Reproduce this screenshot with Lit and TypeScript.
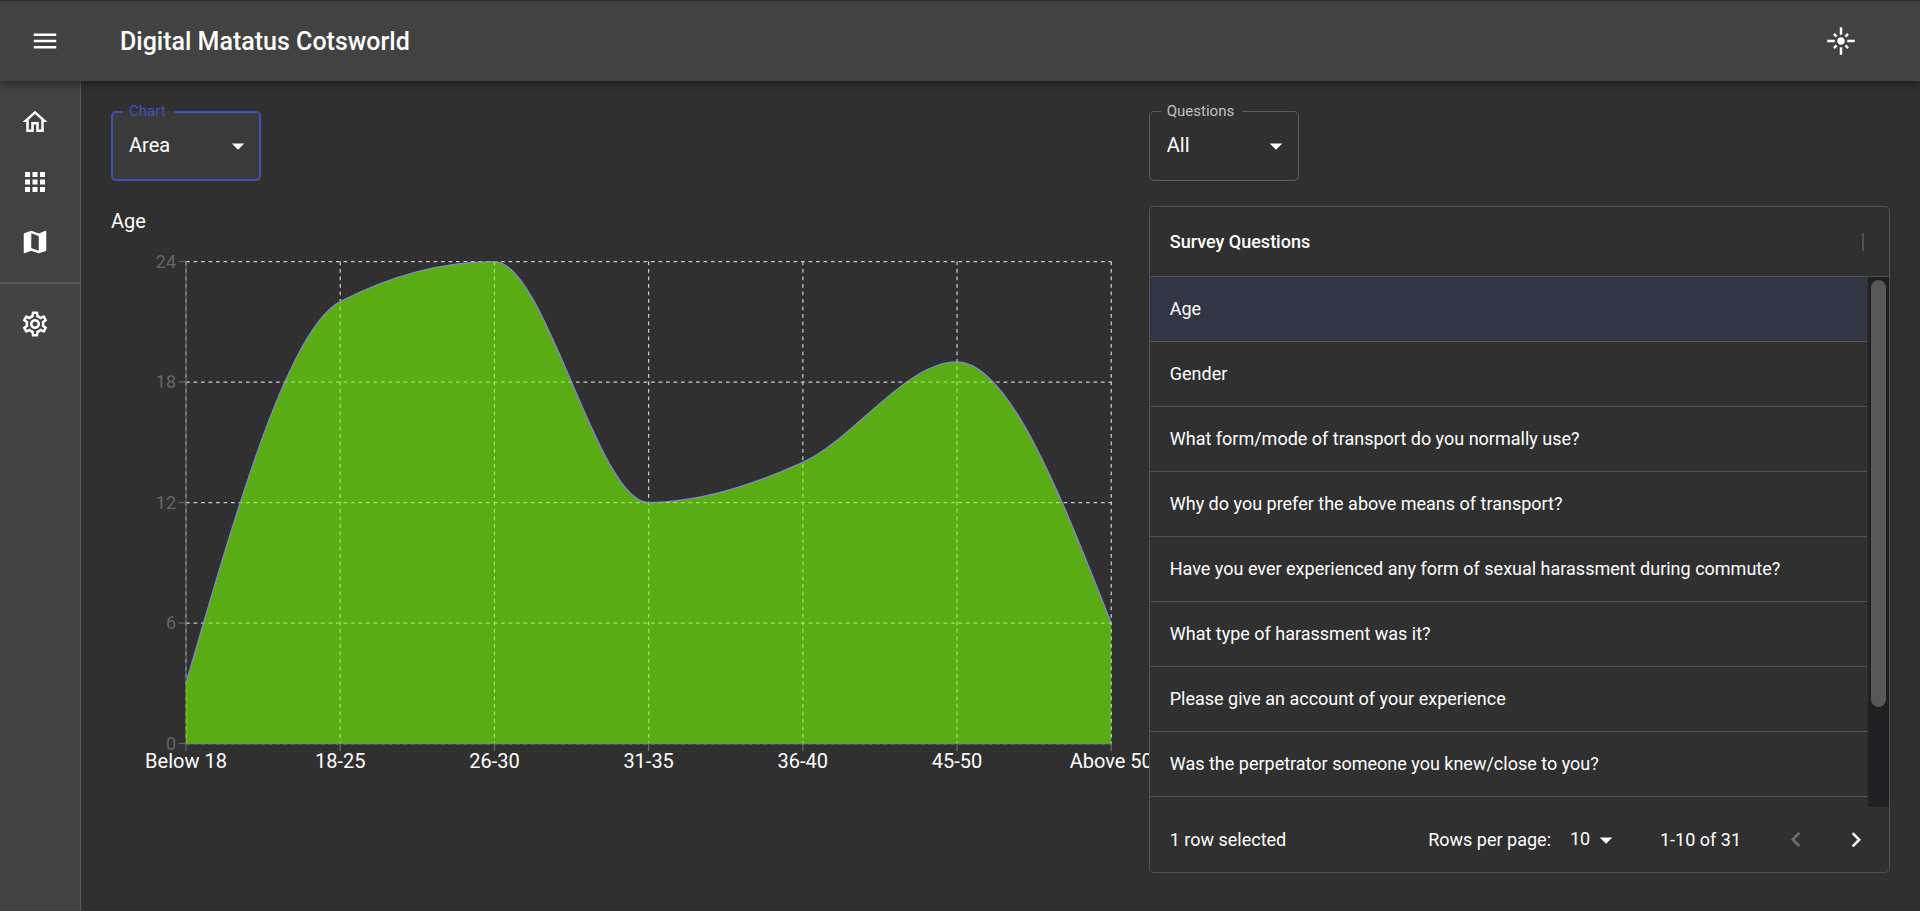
import { LitElement, html, svg, css } from "lit";
import { customElement, property, state } from "lit/decorators.js";
import { classMap } from "lit/directives/class-map.js";

const ICONS = {
  menu: "M3 18h18v-2H3v2zm0-5h18v-2H3v2zm0-7v2h18V6H3z",
  flare:
    "M7 11H1v2h6v-2zm2.17-3.24L7.05 5.64 5.64 7.05l2.12 2.12 1.41-1.41zM13 1h-2v6h2V1zm5.36 6.05l-1.41-1.41-2.12 2.12 1.41 1.41 2.12-2.12zM17 11v2h6v-2h-6zm-5-2c-1.66 0-3 1.34-3 3s1.34 3 3 3 3-1.34 3-3-1.34-3-3-3zm2.83 7.24l2.12 2.12 1.41-1.41-2.12-2.12-1.41 1.41zm-9.19.71l1.41 1.41 2.12-2.12-1.41-1.41-2.12 2.12zM11 23h2v-6h-2v6z",
  home: "M12 5.69l5 4.5V18h-2v-6H9v6H7v-7.81l5-4.5M12 3L2 12h3v8h6v-6h2v6h6v-8h3L12 3z",
  apps: "M4 8h4V4H4v4zm6 12h4v-4h-4v4zm-6 0h4v-4H4v4zm0-6h4v-4H4v4zm6 0h4v-4h-4v4zm6-10v4h4V4h-4zm-6 4h4V4h-4v4zm6 6h4v-4h-4v4zm0 6h4v-4h-4v4z",
  map: "M20.5 3l-.16.03L15 5.1 9 3 3.36 4.9c-.21.07-.36.25-.36.48V20.5c0 .28.22.5.5.5l.16-.03L9 18.9l6 2.1 5.64-1.9c.21-.07.36-.25.36-.48V3.5c0-.28-.22-.5-.5-.5zM15 19l-6-2.11V5l6 2.11V19z",
  settings:
    "M19.43 12.98c.04-.32.07-.64.07-.98 0-.34-.03-.66-.07-.98l2.11-1.65c.19-.15.24-.42.12-.64l-2-3.46c-.09-.16-.26-.25-.44-.25-.06 0-.12.01-.17.03l-2.49 1c-.52-.4-1.08-.73-1.69-.98l-.38-2.65C14.46 2.18 14.25 2 14 2h-4c-.25 0-.46.18-.49.42l-.38 2.65c-.61.25-1.17.59-1.69.98l-2.49-1c-.06-.02-.12-.03-.18-.03-.17 0-.34.09-.43.25l-2 3.46c-.13.22-.07.49.12.64l2.11 1.65c-.04.32-.07.65-.07.98 0 .33.03.66.07.98l-2.11 1.65c-.19.15-.24.42-.12.64l2 3.46c.09.16.26.25.44.25.06 0 .12-.01.17-.03l2.49-1c.52.4 1.08.73 1.69.98l.38 2.65c.03.24.24.42.49.42h4c.25 0 .46-.18.49-.42l.38-2.65c.61-.25 1.17-.59 1.69-.98l2.49 1c.06.02.12.03.18.03.17 0 .34-.09.43-.25l2-3.46c.12-.22.07-.49-.12-.64l-2.11-1.65zm-1.98-1.71c.04.31.05.52.05.73 0 .21-.02.43-.05.73l-.14 1.13.89.7 1.08.84-.7 1.21-1.27-.51-1.04-.42-.9.68c-.43.32-.84.56-1.25.73l-1.06.43-.16 1.13-.2 1.35h-1.4l-.19-1.35-.16-1.13-1.06-.43c-.43-.18-.83-.41-1.23-.71l-.91-.7-1.06.43-1.27.51-.7-1.21 1.08-.84.89-.7-.14-1.13c-.03-.31-.05-.54-.05-.74s.02-.43.05-.73l.14-1.13-.89-.7-1.08-.84.7-1.21 1.27.51 1.04.42.9-.68c.43-.32.84-.56 1.25-.73l1.06-.43.16-1.13.2-1.35h1.39l.19 1.35.16 1.13 1.06.43c.43.18.83.41 1.23.71l.91.7 1.06-.43 1.27-.51.7 1.21-1.07.85-.89.7.14 1.13zM12 8c-2.21 0-4 1.79-4 4s1.79 4 4 4 4-1.79 4-4-1.79-4-4-4zm0 6c-1.1 0-2-.9-2-2s.9-2 2-2 2 .9 2 2-.9 2-2 2z",
  drop: "M7 10l5 5 5-5z",
  previous: "M15.41 16.09l-4.58-4.59 4.58-4.59L14 5.5l-6 6 6 6z",
  next: "M8.59 16.34l4.58-4.59-4.58-4.59L10 5.75l6 6-6 6z",
};

const icon = (name: keyof typeof ICONS) => html`
  <svg class="icon" viewBox="0 0 24 24" aria-hidden="true"><path d=${ICONS[name]}></path></svg>
`;

const iconStyles = css`
  .icon {
    display: block;
    width: 30px;
    height: 30px;
    flex: none;
    fill: currentColor;
  }
`;

interface Answer {
  label: string;
  count: number;
}

const ANSWERS: Answer[] = [
  { label: "Below 18", count: 3 },
  { label: "18-25", count: 22 },
  { label: "26-30", count: 24 },
  { label: "31-35", count: 12 },
  { label: "36-40", count: 14 },
  { label: "45-50", count: 19 },
  { label: "Above 50", count: 6 },
];

const QUESTIONS = [
  "Age",
  "Gender",
  "What form/mode of transport do you normally use?",
  "Why do you prefer the above means of transport?",
  "Have you ever experienced any form of sexual harassment during commute?",
  "What type of harassment was it?",
  "Please give an account of your experience",
  "Was the perpetrator someone you knew/close to you?",
];

const PAGE_SIZE = 10;
const ROW_HEIGHT = 65;
const VIEW_HEIGHT = 530;

/** Cubic path through the points that never overshoots between them. */
function monotonePath(points: [number, number][]): string {
  const n = points.length;
  const slope = (i: number) =>
    (points[i + 1][1] - points[i][1]) / (points[i + 1][0] - points[i][0]);
  const tangents: number[] = new Array(n).fill(0);
  for (let i = 1; i < n - 1; i++) {
    const h0 = points[i][0] - points[i - 1][0];
    const h1 = points[i + 1][0] - points[i][0];
    const s0 = slope(i - 1);
    const s1 = slope(i);
    const p = (s0 * h1 + s1 * h0) / (h0 + h1);
    tangents[i] =
      (Math.sign(s0) + Math.sign(s1)) *
      Math.min(Math.abs(s0), Math.abs(s1), 0.5 * Math.abs(p));
  }
  tangents[0] = (3 * slope(0) - tangents[1]) / 2;
  tangents[n - 1] = (3 * slope(n - 2) - tangents[n - 2]) / 2;
  let d = `M${points[0][0]},${points[0][1]}`;
  for (let i = 0; i < n - 1; i++) {
    const [x0, y0] = points[i];
    const [x1, y1] = points[i + 1];
    const dx = (x1 - x0) / 3;
    d += `C${x0 + dx},${y0 + dx * tangents[i]},${x1 - dx},${y1 - dx * tangents[i + 1]},${x1},${y1}`;
  }
  return d;
}

@customElement("area-chart")
export class AreaChart extends LitElement {
  @property({ attribute: false }) data: Answer[] = [];
  @state() private width = 1037;
  private observer?: ResizeObserver;

  static styles = css`
    :host {
      display: block;
      min-width: 0;
    }
    .chart {
      display: block;
      width: 100%;
      height: 540px;
      overflow: hidden;
      font-family: Roboto, sans-serif;
    }
    .grid {
      stroke: #ccc;
      stroke-width: 1.25;
      stroke-dasharray: 3.75 3.75;
    }
    .axis {
      stroke: #666;
      stroke-width: 1.25;
    }
    .fill {
      fill: #76ff03;
      fill-opacity: 0.6;
    }
    .curve {
      fill: none;
      stroke: #8884d8;
      stroke-width: 1.25;
    }
    .value {
      fill: #666;
      font-size: 18px;
      text-anchor: end;
    }
    .category {
      fill: #fff;
      font-size: 20px;
      text-anchor: middle;
    }
  `;

  connectedCallback() {
    super.connectedCallback();
    this.observer = new ResizeObserver(([entry]) => {
      this.width = entry.contentRect.width;
    });
    this.observer.observe(this);
  }

  disconnectedCallback() {
    this.observer?.disconnect();
    super.disconnectedCallback();
  }

  render() {
    const left = 75;
    const right = this.width - 37.5;
    const top = 25.5;
    const bottom = 507.5;
    const values = [0, 6, 12, 18, 24];
    const x = (i: number) => left + ((right - left) * i) / (this.data.length - 1);
    const y = (v: number) => bottom - ((bottom - top) * v) / 24;
    const line = monotonePath(this.data.map((a, i) => [x(i), y(a.count)]));
    return html`
      <svg class="chart" role="img" aria-label="Age">
        ${values.map((v) => svg`<line class="grid" x1=${left} x2=${right} y1=${y(v)} y2=${y(v)}></line>`)}
        ${this.data.map((_, i) => svg`<line class="grid" x1=${x(i)} x2=${x(i)} y1=${top} y2=${bottom}></line>`)}
        <line class="axis" x1=${left} x2=${right} y1=${bottom} y2=${bottom}></line>
        <line class="axis" x1=${left} x2=${left} y1=${top} y2=${bottom}></line>
        ${values.map(
          (v) => svg`
            <line class="axis" x1=${left - 7.5} x2=${left} y1=${y(v)} y2=${y(v)}></line>
            <text class="value" x=${left - 10} y=${y(v) + 6}>${v}</text>`
        )}
        ${this.data.map(
          (a, i) => svg`
            <line class="axis" x1=${x(i)} x2=${x(i)} y1=${bottom} y2=${bottom + 7.5}></line>
            <text class="category" x=${x(i)} y=${bottom + 24}>${a.label}</text>`
        )}
        <path class="fill" d=${`${line}L${right},${bottom}L${left},${bottom}Z`}></path>
        <path class="curve" d=${line}></path>
      </svg>
    `;
  }
}

@customElement("outlined-select")
export class OutlinedSelect extends LitElement {
  @property() label = "";
  @property() value = "";
  @property({ type: Boolean }) active = false;

  static styles = [
    iconStyles,
    css`
      :host {
        display: block;
        width: 150px;
      }
      .field {
        position: relative;
        display: grid;
        align-items: center;
        justify-items: end;
        color: #fff;
      }
      .field > * {
        grid-area: 1 / 1;
      }
      .select {
        appearance: none;
        box-sizing: border-box;
        width: 100%;
        height: 70px;
        padding: 0 40px 2px 17px;
        border: 1px solid #5e5e5e;
        border-radius: 5px;
        outline: none;
        background: #303030;
        color: inherit;
        font: 400 20px/24px Roboto, sans-serif;
      }
      .icon {
        margin-right: 8px;
        pointer-events: none;
      }
      .label {
        position: absolute;
        top: -9px;
        left: 12px;
        padding: 0 8px 0 6px;
        background: #303030;
        color: #c1c1c1;
        font: 400 15px/18px Roboto, sans-serif;
      }
      .active .select {
        padding-left: 16px;
        border: 2px solid #3f51b5;
        background: #3a3a3a;
      }
      .active .label {
        background: linear-gradient(#303030 50%, #3a3a3a 50%);
        color: #3f51b5;
      }
    `,
  ];

  render() {
    return html`
      <div class=${classMap({ field: true, active: this.active })}>
        <select class="select" id="control">
          <option selected>${this.value}</option>
        </select>
        ${icon("drop")}
        <label class="label" for="control">${this.label}</label>
      </div>
    `;
  }
}

@customElement("question-table")
export class QuestionTable extends LitElement {
  @property({ attribute: false }) questions: string[] = [];
  @state() private selected = 0;

  static styles = [
    iconStyles,
    css`
      :host {
        display: block;
        color: #fff;
        font: 400 18px/26px Roboto, sans-serif;
      }
      .card {
        border: 1px solid #515151;
        border-radius: 5px;
        background: #303030;
      }
      .view {
        display: grid;
        grid-template-columns: minmax(0, 1fr) 21px;
        column-gap: 1px;
      }
      .table {
        display: contents;
      }
      .head {
        display: block;
        grid-column: 1 / -1;
      }
      .head-row,
      .row {
        display: flex;
        align-items: center;
        box-sizing: border-box;
        border-bottom: 1px solid #515151;
      }
      .head-row {
        height: 70px;
      }
      .title {
        display: flex;
        flex: 1;
        align-items: center;
        justify-content: space-between;
        padding: 0 25px 0 20px;
        font-weight: 500;
        text-align: left;
      }
      .separator {
        width: 2px;
        height: 18px;
        background: #515151;
      }
      .body {
        display: block;
        overflow: hidden;
      }
      .row {
        cursor: pointer;
      }
      .selected {
        background: #323545;
      }
      .cell {
        flex: 1;
        min-width: 0;
        padding: 0 20px;
        overflow: hidden;
        text-overflow: ellipsis;
        white-space: nowrap;
      }
      .track {
        box-sizing: border-box;
        padding: 3px;
        background: #202022;
      }
      .thumb {
        border-radius: 8px;
        background: #585858;
      }
      .foot {
        display: flex;
        align-items: center;
        justify-content: space-between;
        height: 65px;
        padding: 0 3px 0 20px;
      }
      .pager {
        display: flex;
        align-items: center;
      }
      .size {
        display: grid;
        align-items: center;
        justify-items: end;
        margin: 0 39px 0 9px;
      }
      .size > * {
        grid-area: 1 / 1;
      }
      .size .icon {
        pointer-events: none;
      }
      .size-select {
        appearance: none;
        width: 61px;
        height: 40px;
        padding: 0 0 2px 10px;
        border: 0;
        background: none;
        color: inherit;
        font: inherit;
      }
      .range {
        margin-right: 25px;
      }
      .page {
        padding: 15px;
        border: 0;
        background: none;
        color: #fff;
      }
      .page:disabled {
        color: #6e6e6e;
      }
    `,
  ];

  render() {
    const thumb = (100 * VIEW_HEIGHT) / (PAGE_SIZE * ROW_HEIGHT);
    return html`
      <div class="card">
        <div class="view">
          <table class="table">
            <thead class="head">
              <tr class="head-row">
                <th class="title" scope="col">Survey Questions<span class="separator"></span></th>
              </tr>
            </thead>
            <tbody class="body" style="height:${VIEW_HEIGHT}px">
              ${this.questions.map(
                (q, i) => html`
                  <tr
                    class=${classMap({ row: true, selected: i === this.selected })}
                    style="height:${ROW_HEIGHT}px"
                    aria-selected=${i === this.selected}
                    @click=${() => (this.selected = i)}
                  >
                    <td class="cell">${q}</td>
                  </tr>
                `
              )}
            </tbody>
          </table>
          <div class="track"><div class="thumb" style="height:${thumb}%"></div></div>
        </div>
        <div class="foot">
          <span>1 row selected</span>
          <div class="pager">
            <label for="size">Rows per page:</label>
            <div class="size">
              <select class="size-select" id="size">
                <option selected>10</option>
              </select>
              ${icon("drop")}
            </div>
            <span class="range">1-10 of 31</span>
            <button class="page" aria-label="Previous page" disabled>${icon("previous")}</button>
            <button class="page" aria-label="Next page">${icon("next")}</button>
          </div>
        </div>
      </div>
    `;
  }
}

@customElement("app-root")
export class AppRoot extends LitElement {
  static styles = [
    iconStyles,
    css`
      :host {
        display: flex;
        flex-direction: column;
        min-height: 100vh;
        background: #303030;
        color: #fff;
        font: 400 20px/30px Roboto, sans-serif;
      }
      .bar {
        position: relative;
        z-index: 1;
        display: flex;
        align-items: center;
        height: 80px;
        padding: 0 49px 0 15px;
        border-top: 1px solid #2b2b2b;
        background: #424242;
        box-shadow: 0 3px 5px -1px rgba(0, 0, 0, 0.2), 0 5px 6px 0 rgba(0, 0, 0, 0.14),
          0 1px 12px 0 rgba(0, 0, 0, 0.12);
      }
      .icon-button {
        padding: 15px;
        border: 0;
        background: none;
        color: #fff;
      }
      .brand {
        flex: 1;
        margin: 0 0 0 45px;
        padding-top: 2px;
        font-size: 25px;
        font-weight: 500;
        line-height: 40px;
      }
      .shell {
        display: flex;
        flex: 1;
      }
      .side {
        flex: none;
        width: 80px;
        border-right: 1px solid #595959;
        background: #424242;
      }
      .links {
        margin: 0;
        padding: 11px 0 10px;
        list-style: none;
      }
      .links + .links {
        padding-top: 10px;
        border-top: 2px solid #595959;
      }
      .link {
        display: block;
        padding: 15px 20px;
        color: #fff;
      }
      .main {
        display: grid;
        flex: 1;
        grid-template-columns: minmax(0, 7fr) minmax(0, 5fr);
        align-items: start;
        min-width: 0;
        padding: 30px;
      }
      .heading {
        margin: 25px 0 0;
        font-size: 20px;
        font-weight: 400;
        line-height: 30px;
      }
      .questions {
        margin-top: 25px;
      }
    `,
  ];

  render() {
    return html`
      <header class="bar">
        <button class="icon-button" aria-label="Open menu">${icon("menu")}</button>
        <h1 class="brand">Digital Matatus Cotsworld</h1>
        <button class="icon-button" aria-label="Toggle theme">${icon("flare")}</button>
      </header>
      <div class="shell">
        <nav class="side">
          <ul class="links">
            <li><a class="link" href="#home" aria-label="Home">${icon("home")}</a></li>
            <li><a class="link" href="#apps" aria-label="Apps">${icon("apps")}</a></li>
            <li><a class="link" href="#map" aria-label="Map">${icon("map")}</a></li>
          </ul>
          <ul class="links">
            <li><a class="link" href="#settings" aria-label="Settings">${icon("settings")}</a></li>
          </ul>
        </nav>
        <main class="main">
          <section>
            <outlined-select label="Chart" value="Area" active></outlined-select>
            <h2 class="heading">Age</h2>
            <area-chart .data=${ANSWERS}></area-chart>
          </section>
          <section>
            <outlined-select label="Questions" value="All"></outlined-select>
            <question-table class="questions" .questions=${QUESTIONS}></question-table>
          </section>
        </main>
      </div>
    `;
  }
}
